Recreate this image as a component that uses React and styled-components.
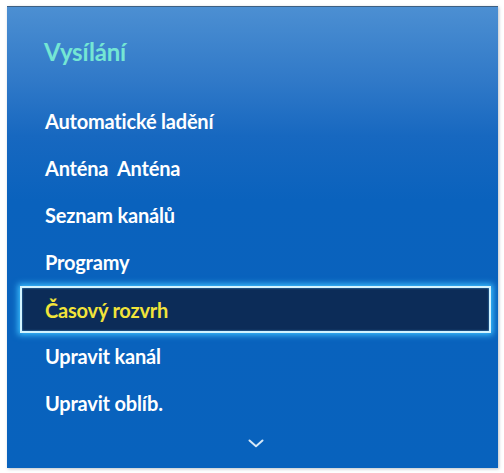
import styled, { createGlobalStyle } from "styled-components";

const GlobalStyle = createGlobalStyle`
  html, body {
    margin: 0;
    padding: 0;
    background: #ffffff;
  }
  body {
    font-family: Lato, "Open Sans", sans-serif;
  }
`;

const Page = styled.div`
  width: 504px;
  height: 473px;
  padding: 6px 6px 5px 7px;
  box-sizing: border-box;
`;

const Panel = styled.div`
  height: 100%;
  box-sizing: border-box;
  display: flex;
  flex-direction: column;
  border-top: 1px solid #3d5f82;
  background: linear-gradient(
    180deg,
    #4c8fd2 0%,
    #3079c8 16%,
    #1768c0 28%,
    #0a62bd 42%,
    #0862bd 100%
  );
  box-shadow: 1px 1px 3px rgba(60, 80, 100, 0.35);
`;

const Title = styled.h1`
  margin: 0;
  padding: 27px 0 0 37px;
  height: 90px;
  box-sizing: border-box;
  font-size: 24px;
  font-weight: 700;
  line-height: 36px;
  color: #74e6d4;
  letter-spacing: -0.2px;
`;

const List = styled.ul`
  list-style: none;
  margin: 0;
  padding: 0;
  display: flex;
  flex-direction: column;
`;

const Item = styled.li`
  height: 47px;
  display: flex;
  align-items: center;
  padding: ${(p) => (p.$active ? "2px 7px 0 13px" : "0")};
  box-sizing: border-box;
`;

const Label = styled.span`
  flex: 1;
  height: ${(p) => (p.$active ? "43px" : "auto")};
  display: flex;
  align-items: center;
  padding-left: ${(p) => (p.$active ? "23px" : "38px")};
  font-size: 20px;
  font-weight: 700;
  letter-spacing: -0.2px;
  color: ${(p) => (p.$active ? "#f2e43a" : "#ffffff")};
  background: ${(p) => (p.$active ? "#0c2c58" : "transparent")};
  border: ${(p) => (p.$active ? "2px solid #d2f4ff" : "none")};
  box-shadow: ${(p) =>
    p.$active ? "0 0 6px 2px #3cc0ff, inset 0 0 2px #4fa8e8" : "none"};
`;

const More = styled.div`
  flex: 1;
  display: flex;
  justify-content: center;
  align-items: center;
  padding: 0 0 8px 6px;
`;

const items = [
  "Automatické ladění",
  "Anténa\u00a0 Anténa",
  "Seznam kanálů",
  "Programy",
  "Časový rozvrh",
  "Upravit kanál",
  "Upravit oblíb.",
];

function App() {
  return (
    <>
      <GlobalStyle />
      <Page>
        <Panel>
          <Title>Vysílání</Title>
          <List>
            {items.map((name, i) => (
              <Item key={name} $active={i === 4}>
                <Label $active={i === 4}>{name}</Label>
              </Item>
            ))}
          </List>
          <More>
            <svg width="16" height="9" viewBox="0 0 16 9">
              <polyline
                points="1.5,1.5 8,7.2 14.5,1.5"
                fill="none"
                stroke="#d7e8f7"
                strokeWidth="2"
                strokeLinecap="round"
                strokeLinejoin="round"
              />
            </svg>
          </More>
        </Panel>
      </Page>
    </>
  );
}

export default App;
